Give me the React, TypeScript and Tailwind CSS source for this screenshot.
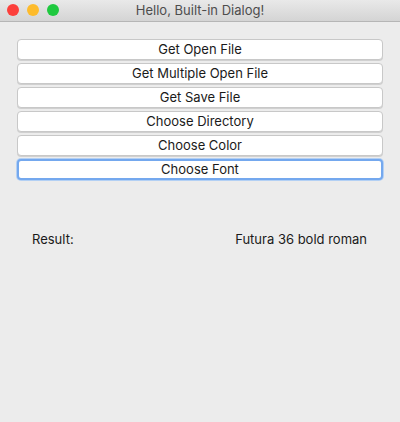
export default function App() {
  const buttons = [
    "Get Open File",
    "Get Multiple Open File",
    "Get Save File",
    "Choose Directory",
    "Choose Color",
    "Choose Font",
  ];

  return (
    <div
      className="w-[400px] h-[422px] bg-[#ececec] flex flex-col overflow-hidden"
      style={{ fontFamily: '"Inter", "Liberation Sans", sans-serif' }}
    >
      {/* title bar */}
      <div className="relative h-[22px] shrink-0 bg-gradient-to-b from-[#e9e9e9] to-[#d4d4d4] border-b border-[#b6b6b6] flex items-center justify-center">
        <div className="absolute left-[7px] top-[4px] flex gap-[8px]">
          <span className="w-[12px] h-[12px] rounded-full bg-[#fc3f3b]" />
          <span className="w-[12px] h-[12px] rounded-full bg-[#fdbb2b]" />
          <span className="w-[12px] h-[12px] rounded-full bg-[#1fc93f]" />
        </div>
        <span className="text-[13px] text-[#4d4d4d]">Hello, Built-in Dialog!</span>
      </div>

      {/* buttons */}
      <div className="flex flex-col gap-[3px] px-[17px] pt-[17px]">
        {buttons.map((b, i) => (
          <button
            key={b}
            className={`h-[21px] w-full rounded-[4px] bg-white text-[13px] text-[#1a1a1a] flex items-center justify-center ${
              i === buttons.length - 1
                ? "border-2 border-[#74a8ee] shadow-[0_0_0_1px_#b3d0f4]"
                : "border border-[#c8c8c8] shadow-[0_1px_0_#d0d0d0]"
            }`}
          >
            {b}
          </button>
        ))}
      </div>

      {/* result */}
      <div className="flex justify-between items-center pl-[32px] pr-[33px] mt-[50px] text-[13px] text-[#1a1a1a]">
        <span>Result:</span>
        <span>Futura 36 bold roman</span>
      </div>
    </div>
  );
}
